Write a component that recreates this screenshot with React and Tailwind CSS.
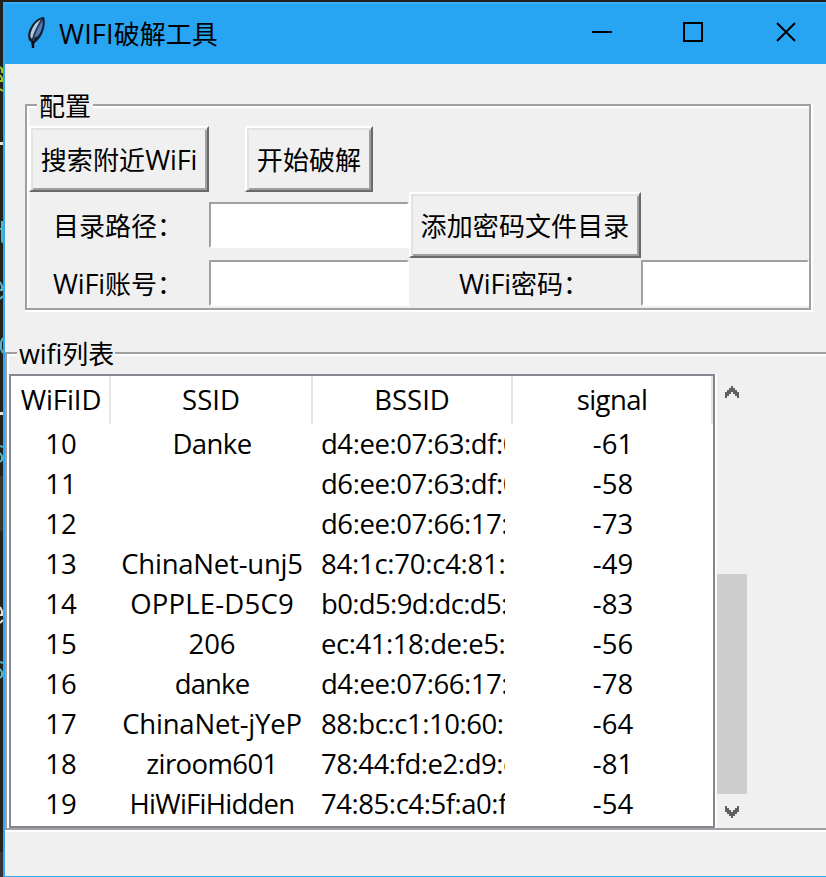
const NETWORKS = [
  [10, "Danke", "d4:ee:07:63:df:08", -61, "tracking-[-0.6px]"],
  [11, "", "d6:ee:07:63:df:08", -58, ""],
  [12, "", "d6:ee:07:66:17:1a", -73, ""],
  [13, "ChinaNet-unj5", "84:1c:70:c4:81:3c", -49, "tracking-[-0.22px]", "tracking-[-0.25px]"],
  [14, "OPPLE-D5C9", "b0:d5:9d:dc:d5:c9", -83, "tracking-[0.2px]", "tracking-[-0.65px]"],
  [15, "206", "ec:41:18:de:e5:08", -56, ""],
  [16, "danke", "d4:ee:07:66:17:1a", -78, "tracking-[-0.9px]"],
  [17, "ChinaNet-jYeP", "88:bc:c1:10:60:1c", -64, "tracking-[-0.22px]"],
  [18, "ziroom601", "78:44:fd:e2:d9:c4", -81, "tracking-[-0.6px]"],
  [19, "HiWiFiHidden", "74:85:c4:5f:a0:fa", -54, "tracking-[-0.75px]"],
];

function Latin({ children }) {
  return <span className="text-[27px] tracking-[-0.1px]">{children}</span>;
}

function Feather() {
  return (
    <svg width="20" height="34" viewBox="0 0 20 34">
      <path d="M5 30 L4 26 C0 24 0 16 5 9 C8 4 13 1 17 1 C19 6 17 15 14 20 C11 25 8 26 7 28 Z" fill="#14202f" />
      <path d="M3.500 21 C3 17 5 12 9 7 L14 3 C11 9 7 15 5 23 Z" fill="#b9cbe2" />
      <path d="M7 22 C8 16 12 10 15.500 4 C16.500 10 14 16 11 20 Z" fill="#547fbb" />
      <path d="M6 26 C7 18 11 10 15 4" stroke="#2b456b" strokeWidth="1.400" fill="none" />
      <path d="M6 25 V32" stroke="#07090d" strokeWidth="2.400" />
    </svg>
  );
}

function TitleBar() {
  return (
    <header className="flex h-[62px] items-center border-t-2 border-[#3bacf5] bg-[#27a4f2]">
      <div className="mb-0.5 ml-[22px] h-[34px] w-5"><Feather /></div>
      <h1 className="ml-3 flex-1 whitespace-nowrap text-[26px]">
        <span className="text-[27px] tracking-[0.2px]">WIFI</span>破解工具
      </h1>
      <svg width="204" height="20" viewBox="0 0 204 20" shapeRendering="crispEdges" className="mr-[30px] mb-1" fill="none" stroke="#000" strokeWidth="2">
        <path d="M0 10H20" />
        <path d="M92 1H110V19H92Z" />
        <path d="M185 1L203 19M203 1L185 19" shapeRendering="auto" />
      </svg>
    </header>
  );
}

function Button({ children, className }) {
  return (
    <button className={`h-[66px] whitespace-nowrap border-2 border-t-white border-l-white border-r-[#696969] border-b-[#696969] pt-0.5 tracking-[0.1px] shadow-[inset_2px_2px_0_#e3e3e3,inset_-2px_-2px_0_#a0a0a0] ${className}`}>
      {children}
    </button>
  );
}

function Entry() {
  return <input className="block h-[46px] w-full border-2 border-white border-t-[#a0a0a0] border-l-[#a0a0a0] bg-white outline-none" />;
}

function Config() {
  return (
    <section className="mt-10 ml-5 h-[206px] w-[786px] border-2 border-[#a0a0a0] pl-0.5 shadow-[inset_2px_2px_0_#fff,2px_2px_0_#fff,0_2px_0_#fff,2px_0_0_#fff]">
      <h2 className="-mt-3.5 ml-2 h-[34px] w-14 bg-[#f0f0f0] pl-0.5 leading-[28px]">配置</h2>
      <div className="grid grid-cols-[180px_200px_232px_168px] grid-rows-[66px_66px_50px] items-center">
        <Button className="w-[180px]">搜索附近<Latin>WiFi</Latin></Button>
        <Button className="ml-9 w-32">开始破解</Button>
        <i /><i />
        <label className="pt-0.5 pr-0.5 text-center">目录路径：</label>
        <Entry />
        <Button className="w-[232px]">添加密码文件目录</Button>
        <i />
        <label className="pt-px pr-0.5 text-center"><Latin>WiFi</Latin>账号：</label>
        <Entry />
        <label className="pt-px pr-0.5 text-center"><Latin>WiFi</Latin>密码：</label>
        <Entry />
      </div>
    </section>
  );
}

function Chevron({ down }) {
  return (
    <svg width="14" height="12" viewBox="0 0 7 6" shapeRendering="crispEdges" fill="#606060" className={down ? "rotate-180" : ""}>
      <path d="M3 0h1v1h1v1h1v1h1v3h-1v-1h-1v-1h-1v-1h-1v1h-1v1h-1v1h-1v-3h1v-1h1v-1h1z" />
    </svg>
  );
}

function NetworkList() {
  return (
    <section className="mt-[42px] h-[478px] border-2 border-r-0 border-[#a0a0a0] pl-0.5 shadow-[inset_2px_2px_0_#fff,0_2px_0_#fff]">
      <h2 className="-mt-3.5 ml-2 h-[34px] w-[98px] whitespace-nowrap bg-[#f0f0f0] pl-0.5 leading-[28px]"><Latin>wifi</Latin>列表</h2>
      <div className="flex h-[454px]">
        <div className="w-[706px] border-2 border-[#828790] bg-white text-[27.5px] shadow-[2px_0_0_#fff]">
          <div className="grid h-12 grid-cols-[100px_202px_200px_200px] text-center leading-[48px]">
            <div className="border-r-2 border-[#e5e5e5] pl-0.5 tracking-[-0.1px]">WiFiID</div>
            <div className="border-r-2 border-[#e5e5e5]">SSID</div>
            <div className="border-r-2 border-[#e5e5e5]">BSSID</div>
            <div className="border-r-2 border-[#e5e5e5] tracking-[-0.6px]">signal</div>
          </div>
          {NETWORKS.map(([id, ssid, bssid, signal, ssidTracking = "", bssidTracking = "tracking-[-0.45px]"]) => (
            <div key={id} className="grid h-10 grid-cols-[100px_202px_200px_200px] text-center leading-[40px]">
              <div>{id}</div>
              <div className={ssidTracking}>{ssid}</div>
              <div className={`ml-2 w-[184px] overflow-hidden text-left whitespace-nowrap ${bssidTracking}`}>{bssid}</div>
              <div>{signal}</div>
            </div>
          ))}
        </div>
        <div className="ml-0.5 flex w-[30px] flex-col items-center pt-3">
          <Chevron />
          <div className="mt-[176px] mb-3 h-[220px] w-full bg-[#cdcdcd]" />
          <Chevron down />
        </div>
      </div>
    </section>
  );
}

function EditorStrip() {
  return (
    <svg width="3" height="877" viewBox="0 0 3 877" fill="none">
      <rect y="476" width="3" height="55" fill="#3a352c" />
      <rect y="852" width="3" height="25" fill="#333338" />
      <path d="M0 142h3v3H0zM0 412h3v3H0z" fill="#e4e4df" />
      <path d="M0 67l2 2v4M0 75l2 3v3H0M0 89l3 2" stroke="#9bcb21" strokeWidth="2" />
      <path d="M2 221v20l1 2M0 229h3M0 282l2 4v4H0M0 299l3-3M3 338l-2 4v7l2 4M0 446l3 1M0 453l2 3v4l-2 2M0 662l3 1M0 669l2 3v4l-2 2" stroke="#4eb6ce" strokeWidth="2" />
      <path d="M0 607l2 4v4H0M0 623l3-3" stroke="#e6dfd2" strokeWidth="2" />
    </svg>
  );
}

export default function App() {
  return (
    <div className="flex h-[877px] w-[826px] overflow-hidden bg-[#23211b] font-['Open_Sans','Noto_Sans_CJK_SC',sans-serif] text-[26px] leading-[30px] text-black">
      <EditorStrip />
      <main className="mt-0.5 h-[875px] w-[823px] border-b border-l-2 border-[#32a8f3] bg-[#f0f0f0]">
        <TitleBar />
        <Config />
        <NetworkList />
      </main>
    </div>
  );
}
